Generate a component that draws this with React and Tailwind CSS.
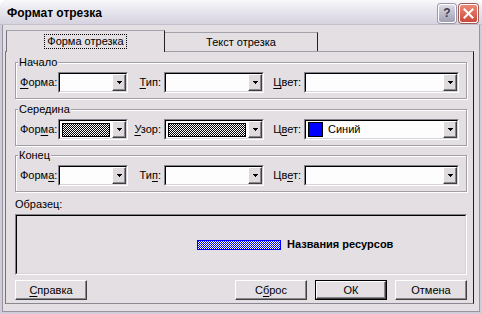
import React from "react";

const BG = "bg-[#e3dfe3]";

function Arrow() {
  return (
    <svg width="5" height="3" viewBox="0 0 5 3" shapeRendering="crispEdges">
      <rect x="0" y="0" width="5" height="1" fill="#000" />
      <rect x="1" y="1" width="3" height="1" fill="#000" />
      <rect x="2" y="2" width="1" height="1" fill="#000" />
    </svg>
  );
}

function Checker({ id, color, className }) {
  return (
    <svg className={className} shapeRendering="crispEdges">
      <defs>
        <pattern id={id} width="2" height="2" patternUnits="userSpaceOnUse">
          <rect width="2" height="2" fill="#ffffff" />
          <rect x="0" y="0" width="1" height="1" fill={color} />
          <rect x="1" y="1" width="1" height="1" fill={color} />
        </pattern>
      </defs>
      <rect width="100%" height="100%" fill={`url(#${id})`} />
    </svg>
  );
}

function Combo({ className, children }) {
  return (
    <div
      className={`flex h-[21px] shrink-0 border border-t-[#86828c] border-l-[#86828c] border-r-white border-b-white ${className}`}
    >
      <div className="flex flex-1 border border-t-black border-l-black border-r-[#d6d2d8] border-b-[#d6d2d8] bg-[#fcfdfc]">
        <div className="flex min-w-0 flex-1 items-center">{children}</div>
        <div className="flex w-[14px] items-center justify-center border border-t-white border-l-white border-r-[#404040] border-b-[#404040] bg-[#dedade] shadow-[inset_-1px_-1px_0_#8a868e]">
          <Arrow />
        </div>
      </div>
    </div>
  );
}

function Lbl({ className, children }) {
  return <div className={`shrink-0 leading-[13px] ${className}`}>{children}</div>;
}

function U({ children }) {
  return <span className="underline decoration-1 underline-offset-[2px]">{children}</span>;
}

function Group({ title, className, children }) {
  return (
    <fieldset
      className={`border border-[#a29ea6] px-0 pt-[3px] pb-[5px] shadow-[inset_1px_1px_0_#ffffff,1px_1px_0_#ffffff] ${className}`}
    >
      <legend className={`ml-[2px] px-[1px] leading-[13px] ${BG}`}>{title}</legend>
      <div className="flex items-center pl-[4px]">{children}</div>
    </fieldset>
  );
}

function Btn({ children, def }) {
  const inner = (
    <div className="flex h-full w-full items-center justify-center border border-t-white border-l-white border-r-[#404040] border-b-[#404040] shadow-[inset_-1px_-1px_0_#8a868e]">
      {children}
    </div>
  );
  if (def) {
    return <div className="h-[20px] w-[72px] border border-black">{inner}</div>;
  }
  return <div className="h-[20px] w-[72px]">{inner}</div>;
}

export default function App() {
  return (
    <div
      className={`flex h-[314px] w-[482px] flex-col overflow-hidden rounded-t-[8px] ${BG} text-[11px] text-black font-['Liberation_Sans',Arial,sans-serif]`}
    >
      {/* Title bar */}
      <div className="flex h-[25px] shrink-0 items-center border-b border-[#c3c0cc] bg-gradient-to-b from-[#f8f8fb] via-[#e6e4ec] to-[#d6d3e0] pl-[7px] pr-[4px] pt-[2px]">
        <div className="flex-1 text-[12px] font-bold leading-[14px]">Формат отрезка</div>
        <div className="flex gap-[3px]">
          <div className="flex h-[19px] w-[18px] items-center justify-center rounded-[3px] border border-white bg-gradient-to-b from-[#dcdce6] to-[#9f9fb3] shadow-[0_0_0_1px_#9a98aa]">
            <span className="text-[12px] font-bold leading-none text-[#3c3c50]">?</span>
          </div>
          <div className="flex h-[19px] w-[19px] items-center justify-center rounded-[3px] border border-white bg-gradient-to-b from-[#ec8a76] to-[#c9473a] shadow-[0_0_0_1px_#a05a58]">
            <svg width="11" height="11" viewBox="0 0 11 11">
              <path d="M1.5 1.5L9.5 9.5M9.5 1.5L1.5 9.5" stroke="#ffffff" strokeWidth="2" strokeLinecap="square" />
            </svg>
          </div>
        </div>
      </div>

      {/* Body with frame */}
      <div className="flex flex-1 flex-col border-x-2 border-b-2 border-[#d0cdda]">
        <div className="flex flex-1 flex-col border-x border-b border-[#97949f] pl-[2px] pr-[5px] pt-[5px] pb-[7px]">
          {/* Tabs */}
          <div className="flex h-[21px] shrink-0 items-end pl-[1px]">
            <div
              className={`relative z-10 -mb-px flex h-[22px] w-[159px] items-center justify-center border-t border-l border-r border-t-[#a6a2ac] border-l-[#77747f] border-r-[#222222] ${BG}`}
            >
              <span className="px-[2px] leading-[13px] outline-1 outline-dotted outline-black">Форма отрезка</span>
            </div>
            <div className="flex h-[19px] w-[153px] items-center justify-center border-t border-r border-t-[#a6a2ac] border-r-[#222222] pt-[1px]">
              Текст отрезка
            </div>
          </div>

          {/* Panel */}
          <div className="flex flex-1 flex-col border border-t-[#a09ca8] border-l-[#77747f] border-b-[#8a8792] border-r-[#1e1e1e] pl-[9px] pr-[6px] pt-[4px]">
            <Group title="Начало">
              <Lbl className="w-[38px]"><U>Ф</U>орма:</Lbl>
              <Combo className="w-[70px]" />
              <Lbl className="w-[36px] pr-[3px] text-right"><U>Т</U>ип:</Lbl>
              <Combo className="w-[100px]" />
              <Lbl className="w-[40px] pr-[3px] text-right"><U>Ц</U>вет:</Lbl>
              <Combo className="w-[155px]" />
            </Group>

            <Group title="Середина" className="mt-[4px]">
              <Lbl className="w-[38px]">Фор<U>м</U>а:</Lbl>
              <Combo className="w-[70px]">
                <div className="ml-[2px] mr-[2px] flex h-[14px] flex-1 border border-black">
                  <Checker id="p1" color="#000000" className="h-full w-full" />
                </div>
              </Combo>
              <Lbl className="w-[36px] pr-[3px] text-right"><U>У</U>зор:</Lbl>
              <Combo className="w-[100px]">
                <div className="ml-[2px] mr-[2px] flex h-[14px] flex-1 border border-black">
                  <Checker id="p2" color="#000000" className="h-full w-full" />
                </div>
              </Combo>
              <Lbl className="w-[40px] pr-[3px] text-right">Ц<U>в</U>ет:</Lbl>
              <Combo className="w-[155px]">
                <div className="ml-[2px] h-[15px] w-[15px] shrink-0 border border-black bg-[#0000ff]" />
                <span className="ml-[5px] leading-[13px]">Синий</span>
              </Combo>
            </Group>

            <Group title="Конец" className="mt-[3px]">
              <Lbl className="w-[38px]">Форм<U>а</U>:</Lbl>
              <Combo className="w-[70px]" />
              <Lbl className="w-[36px] pr-[3px] text-right">Ти<U>п</U>:</Lbl>
              <Combo className="w-[100px]" />
              <Lbl className="w-[40px] pr-[3px] text-right">Цв<U>е</U>т:</Lbl>
              <Combo className="w-[155px]" />
            </Group>

            <div className="mt-[6px] leading-[13px]">Образец:</div>

            <div className="mt-[3px] h-[61px] border border-t-[#86828c] border-l-[#86828c] border-r-white border-b-white">
              <div className="flex h-full items-center gap-[6px] border border-t-black border-l-black border-r-[#d6d2d8] border-b-[#d6d2d8] pl-[180px]">
                <div className="flex h-[10px] w-[84px] border border-[#0000ff]">
                  <Checker id="p3" color="#0000ff" className="h-full w-full" />
                </div>
                <span className="font-bold leading-[13px]">Названия ресурсов</span>
              </div>
            </div>

            <div className="mt-[5px] flex items-center">
              <Btn><span><U>С</U>правка</span></Btn>
              <div className="ml-auto flex gap-[8px]">
                <Btn><span>С<U>б</U>рос</span></Btn>
                <Btn def>ОК</Btn>
                <Btn>Отмена</Btn>
              </div>
            </div>
          </div>
        </div>
      </div>
    </div>
  );
}
